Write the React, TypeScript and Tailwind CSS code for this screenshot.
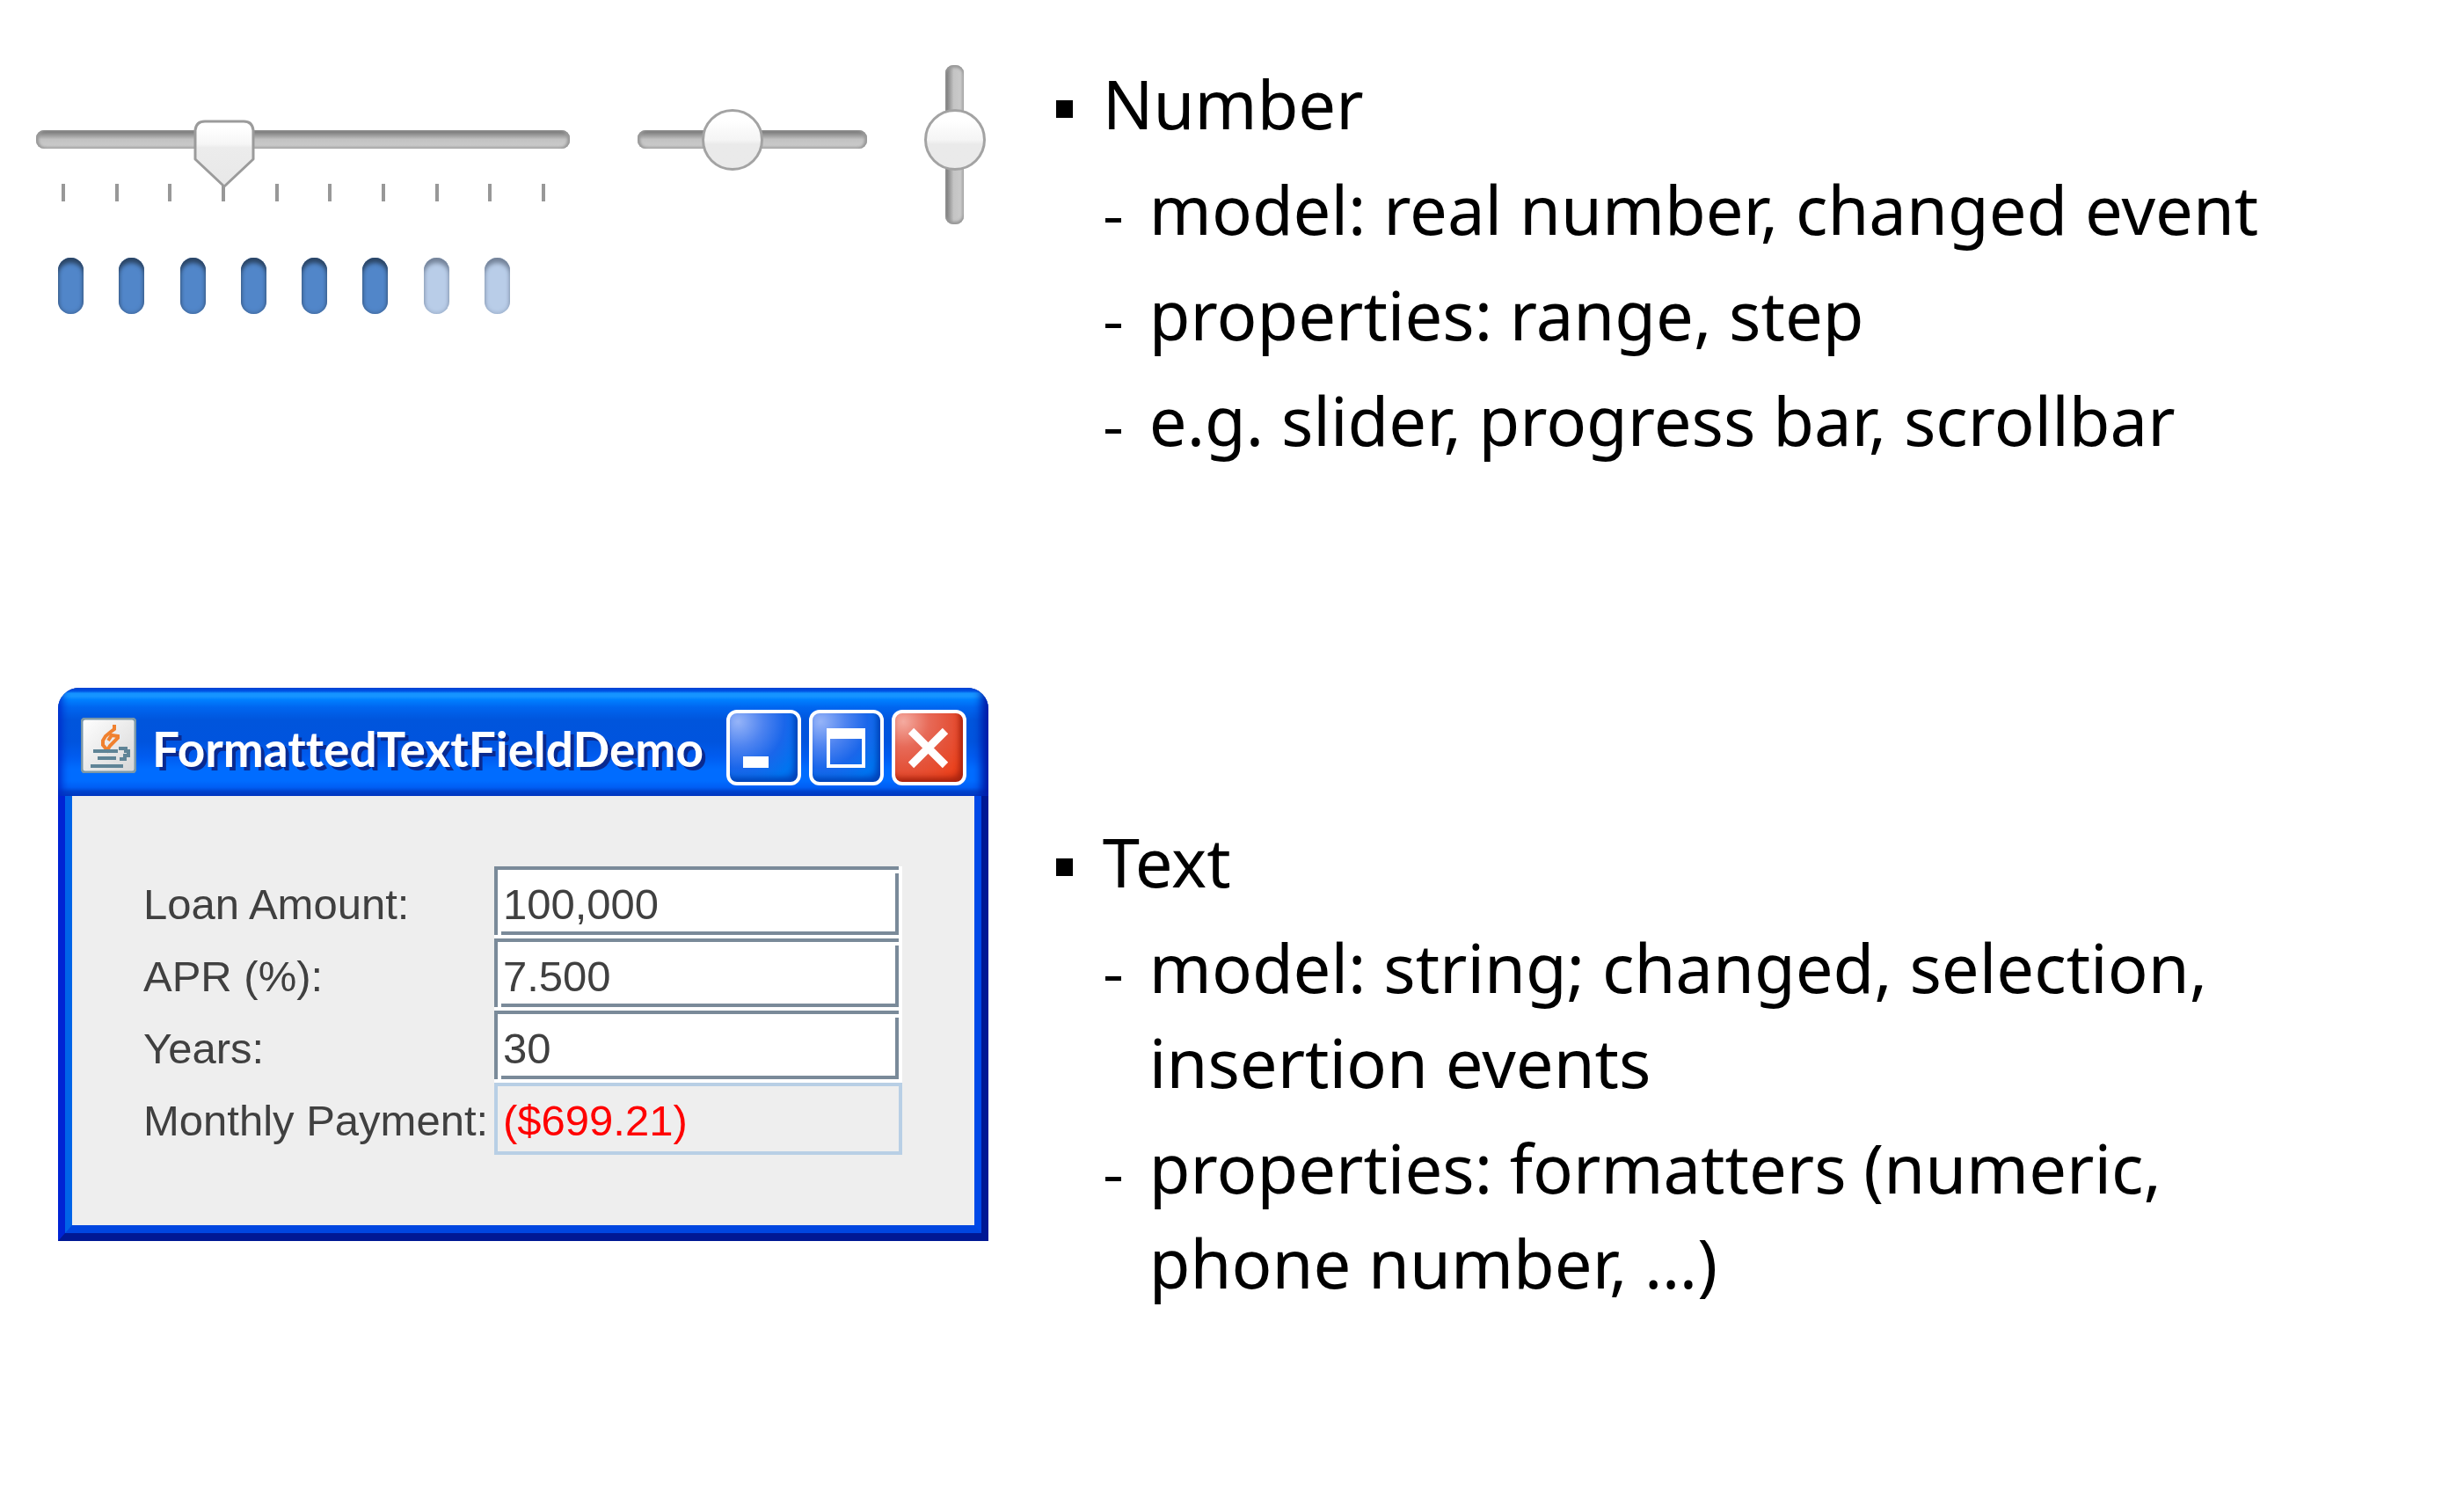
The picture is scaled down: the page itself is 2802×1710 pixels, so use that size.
import React, { useId, useState } from "react";

type RangeProps = { label: string; initial: number };

const roundThumb =
  "[&::-webkit-slider-thumb]:size-[70px] [&::-webkit-slider-thumb]:appearance-none [&::-webkit-slider-thumb]:rounded-full [&::-webkit-slider-thumb]:border-3 [&::-webkit-slider-thumb]:border-[#a3a3a3] [&::-webkit-slider-thumb]:bg-linear-to-b [&::-webkit-slider-thumb]:from-white [&::-webkit-slider-thumb]:from-15% [&::-webkit-slider-thumb]:via-[#f5f5f5] [&::-webkit-slider-thumb]:via-50% [&::-webkit-slider-thumb]:to-[#eaeaea] [&::-webkit-slider-thumb]:to-58%";

const horizontalTrack =
  "h-[21px] appearance-none rounded-[9px] bg-linear-to-b from-[#7f7f7f] from-10% via-[#c2c2c2] via-50% to-[#cdcdcd] shadow-[inset_3px_0_3px_#999,inset_-3px_0_3px_#999,inset_0_-3px_2px_#bcbcbc]";

function TickedSlider({ label, initial }: RangeProps) {
  const [value, setValue] = useState(initial);
  return (
    <div className="flex w-[607px] flex-col">
      <div className="relative flex">
        <input
          type="range"
          min={0}
          max={9}
          value={value}
          aria-label={label}
          onChange={(e) => setValue(Number(e.target.value))}
          className={`w-full ${horizontalTrack} [&::-webkit-slider-thumb]:h-[77px] [&::-webkit-slider-thumb]:w-[70px] [&::-webkit-slider-thumb]:appearance-none [&::-webkit-slider-thumb]:bg-transparent`}
        />
        <div className="pointer-events-none absolute inset-x-[35px] -top-3">
          <svg
            viewBox="0 0 70 78"
            className="relative h-[78px] w-[70px] -translate-x-1/2"
            style={{ left: `${(value / 9) * 100}%` }}
            aria-hidden="true"
          >
            <defs>
              <linearGradient id="pointer" x1="0" y1="0" x2="0" y2="1">
                <stop offset="0.1" stopColor="#ffffff" />
                <stop offset="0.35" stopColor="#f6f6f6" />
                <stop offset="0.4" stopColor="#ececec" />
                <stop offset="1" stopColor="#e8e8e8" />
              </linearGradient>
            </defs>
            <path
              d="M2 12Q3 2 13 2H57Q67 2 68 12V45L35 76L2 45Z"
              fill="url(#pointer)"
              stroke="#9b9b9b"
              strokeWidth="3"
              strokeLinejoin="round"
            />
          </svg>
        </div>
      </div>
      <div className="mt-10 flex justify-between pr-7 pl-[29px]">
        {Array.from({ length: 10 }, (_, i) => (
          <span key={i} className="h-5 w-1 bg-[#989898]" />
        ))}
      </div>
    </div>
  );
}

function SegmentedProgress({ value, max }: { value: number; max: number }) {
  return (
    <div
      role="progressbar"
      aria-label="Progress"
      aria-valuenow={value}
      aria-valuemin={0}
      aria-valuemax={max}
      className="flex w-[514px] justify-between"
    >
      {Array.from({ length: max }, (_, i) => (
        <span
          key={i}
          className={
            i < value
              ? "h-16 w-[29px] rounded-full bg-[#5186c9] shadow-[inset_0_7px_5px_-1px_#2c4666,inset_0_0_4px_1px_#41689b]"
              : "h-16 w-[29px] rounded-full bg-[#b9cde8] shadow-[inset_0_7px_5px_-1px_#75849a,inset_0_0_4px_1px_#9aadc8]"
          }
        />
      ))}
    </div>
  );
}

function JavaIcon() {
  return (
    <svg viewBox="0 0 63 63" className="mt-2 size-[63px] shrink-0" aria-hidden="true">
      <defs>
        <linearGradient id="plate" x1="0" y1="0" x2="1" y2="1">
          <stop offset="0" stopColor="#ffffff" />
          <stop offset="1" stopColor="#d6d6d6" />
        </linearGradient>
      </defs>
      <rect x="1" y="1" width="61" height="61" rx="4" fill="url(#plate)" stroke="#7b98a8" strokeWidth="3" />
      <path
        d="M38 8V13L34 16L28 21L25 26V31L30 37L33 32L42 23V21L35 20L31 26"
        fill="none"
        stroke="#f0812f"
        strokeWidth="4"
      />
      <path d="M14 36H42V40H14ZM19 44H40V48H19ZM11 53H48V57H11Z" fill="#5f8496" />
      <path d="M43 35H51V38H54V43H50V47H44" fill="none" stroke="#5f8496" strokeWidth="4" />
    </svg>
  );
}

const captionButton =
  "flex h-[86px] w-[85px] items-center justify-center rounded-xl border-4 border-white";
const blueButton =
  "bg-[radial-gradient(circle_at_12%_12%,#96b4f8_0%,#4d83f0_30%,#1a66ea_55%,#0074f0_80%,#0060e0_100%)] shadow-[inset_-4px_-5px_6px_#0043b8]";
const redButton =
  "bg-[radial-gradient(circle_at_12%_12%,#f4aba0_0%,#e76a58_30%,#e4533a_55%,#ea4420_80%,#d63010_100%)] shadow-[inset_-4px_-5px_6px_#a82410]";

function TitleBar() {
  return (
    <header className="flex h-[123px] items-center bg-[linear-gradient(to_bottom,#0052e0_0%,#0058e8_3%,#1694ff_5%,#1694ff_8%,#0080ff_11%,#0066f0_18%,#0055dc_30%,#0054de_50%,#005cf0_64%,#006cff_75%,#006cff_86%,#005ef4_92%,#0044cc_96%,#0040c4_100%)] pr-[25px] pl-[26px] shadow-[inset_8px_0_10px_-4px_#0028c8,inset_-12px_0_10px_-4px_#001ca8]">
      <JavaIcon />
      <h2 className="mt-4 ml-[18px] flex-1 font-['Lato',sans-serif] text-[55px] leading-none font-bold whitespace-nowrap text-white [font-variant-ligatures:none] [text-shadow:4px_4px_0_#0a2a90]">
        FormattedTextFieldDemo
      </h2>
      <div className="mt-3 flex shrink-0 gap-[9px]">
        <button type="button" aria-label="Minimize" className={`${captionButton} ${blueButton}`}>
          <svg viewBox="0 0 77 78" className="h-[78px] w-[77px]" aria-hidden="true">
            <rect x="15" y="49" width="29" height="13" fill="#fff" />
          </svg>
        </button>
        <button type="button" aria-label="Maximize" className={`${captionButton} ${blueButton}`}>
          <svg viewBox="0 0 77 78" className="h-[78px] w-[77px]" aria-hidden="true">
            <path d="M16 17H60V62H16ZM20 29V58H56V29Z" fill="#fff" fillRule="evenodd" />
          </svg>
        </button>
        <button type="button" aria-label="Close" className={`${captionButton} ${redButton}`}>
          <svg viewBox="0 0 77 78" className="h-[78px] w-[77px]" aria-hidden="true">
            <path d="M18 20L57 59M57 20L18 59" stroke="#fff" strokeWidth="9" />
          </svg>
        </button>
      </div>
    </header>
  );
}

function Field({ label, initial, readOnly = false }: { label: string; initial: string; readOnly?: boolean }) {
  const id = useId();
  const [value, setValue] = useState(initial);
  return (
    <>
      <label htmlFor={id} className="flex items-center pt-1 whitespace-nowrap text-[#404040]">
        {label}
      </label>
      {readOnly ? (
        <input
          id={id}
          readOnly
          value={value}
          className="h-[82px] w-full min-w-0 border-4 border-[#b8cfe5] bg-[#eee] px-1.5 pt-1 text-[#f00]"
        />
      ) : (
        <div className="relative h-[82px] border-r-4 border-b-4 border-white">
          <input
            id={id}
            value={value}
            onChange={(e) => setValue(e.target.value)}
            className="size-full min-w-0 border-4 border-[#7a8a99] bg-white px-1.5 pt-2 text-[#404040]"
          />
          <span className="pointer-events-none absolute top-1 right-0 size-1 bg-white" />
          <span className="pointer-events-none absolute bottom-0 left-1 size-1 bg-white" />
        </div>
      )}
    </>
  );
}

function DemoWindow() {
  return (
    <section
      aria-label="FormattedTextFieldDemo"
      className="w-[1058px] overflow-hidden rounded-t-[24px] bg-[#001590]"
    >
      <TitleBar />
      <div className="border-x-8 border-b-[9px] border-l-[#0024d4] border-r-[#001894] border-b-[#001894]">
        <div className="border-x-8 border-b-[9px] border-l-[#0064e8] border-r-[#0048e8] border-b-[#0046e0]">
          <form className="grid grid-cols-[391px_464px] gap-x-2 bg-[#eee] py-20 pl-[81px] font-['Liberation_Sans',Arial,sans-serif] text-[49px] leading-none">
            <Field label="Loan Amount:" initial="100,000" />
            <Field label="APR (%):" initial="7.500" />
            <Field label="Years:" initial="30" />
            <Field label="Monthly Payment:" initial="($699.21)" readOnly />
          </form>
        </div>
      </div>
    </section>
  );
}

function Topic({ title, points }: { title: string; points: string[] }) {
  return (
    <ul className="font-['Noto_Sans','Segoe_UI',sans-serif] text-[76px] leading-[108px] text-black">
      <li className="flex flex-col gap-3">
        <div className="flex items-center gap-[34px]">
          <span className="mt-3 h-5 w-[19px] bg-black" />
          <h1>{title}</h1>
        </div>
        <ul className="flex flex-col gap-3 pl-14">
          {points.map((p) => (
            <li key={p} className="flex gap-8">
              <span className="mt-16 h-[5px] w-[18px] shrink-0 bg-black" />
              <span>{p}</span>
            </li>
          ))}
        </ul>
      </li>
    </ul>
  );
}

export default function App() {
  return (
    <main className="grid min-h-screen grid-cols-[3fr_4fr] grid-rows-[auto_1fr] bg-white">
      <section aria-label="Number widgets" className="min-h-[782px] pt-[74px] pl-[41px]">
        <div className="flex items-start">
          <div className="mt-[74px]">
            <TickedSlider label="Value with ticks" initial={3} />
            <div className="mt-16 ml-[25px]">
              <SegmentedProgress value={6} max={8} />
            </div>
          </div>
          <input
            type="range"
            aria-label="Value"
            defaultValue={38}
            className={`mt-[74px] ml-[77px] w-[261px] ${horizontalTrack} ${roundThumb}`}
          />
          <input
            type="range"
            aria-label="Vertical value"
            defaultValue={55}
            className={`ml-[89px] h-[181px] w-[21px] appearance-none rounded-[9px] bg-linear-to-r from-[#848484] from-10% via-[#c4c4c4] via-45% to-[#cdcdcd] shadow-[inset_0_3px_3px_#999,inset_0_-3px_3px_#999,inset_-3px_0_2px_#bcbcbc] [direction:rtl] [writing-mode:vertical-lr] ${roundThumb}`}
          />
        </div>
      </section>
      <section className="pt-16 pr-[200px]">
        <Topic
          title="Number"
          points={["model: real number, changed event", "properties: range, step", "e.g. slider, progress bar, scrollbar"]}
        />
      </section>
      <section aria-label="Text widgets" className="pb-12 pl-[66px]">
        <DemoWindow />
      </section>
      <section className="pt-36 pr-[200px]">
        <Topic
          title="Text"
          points={[
            "model: string; changed, selection, insertion events",
            "properties: formatters (numeric, phone number, …)",
          ]}
        />
      </section>
    </main>
  );
}
